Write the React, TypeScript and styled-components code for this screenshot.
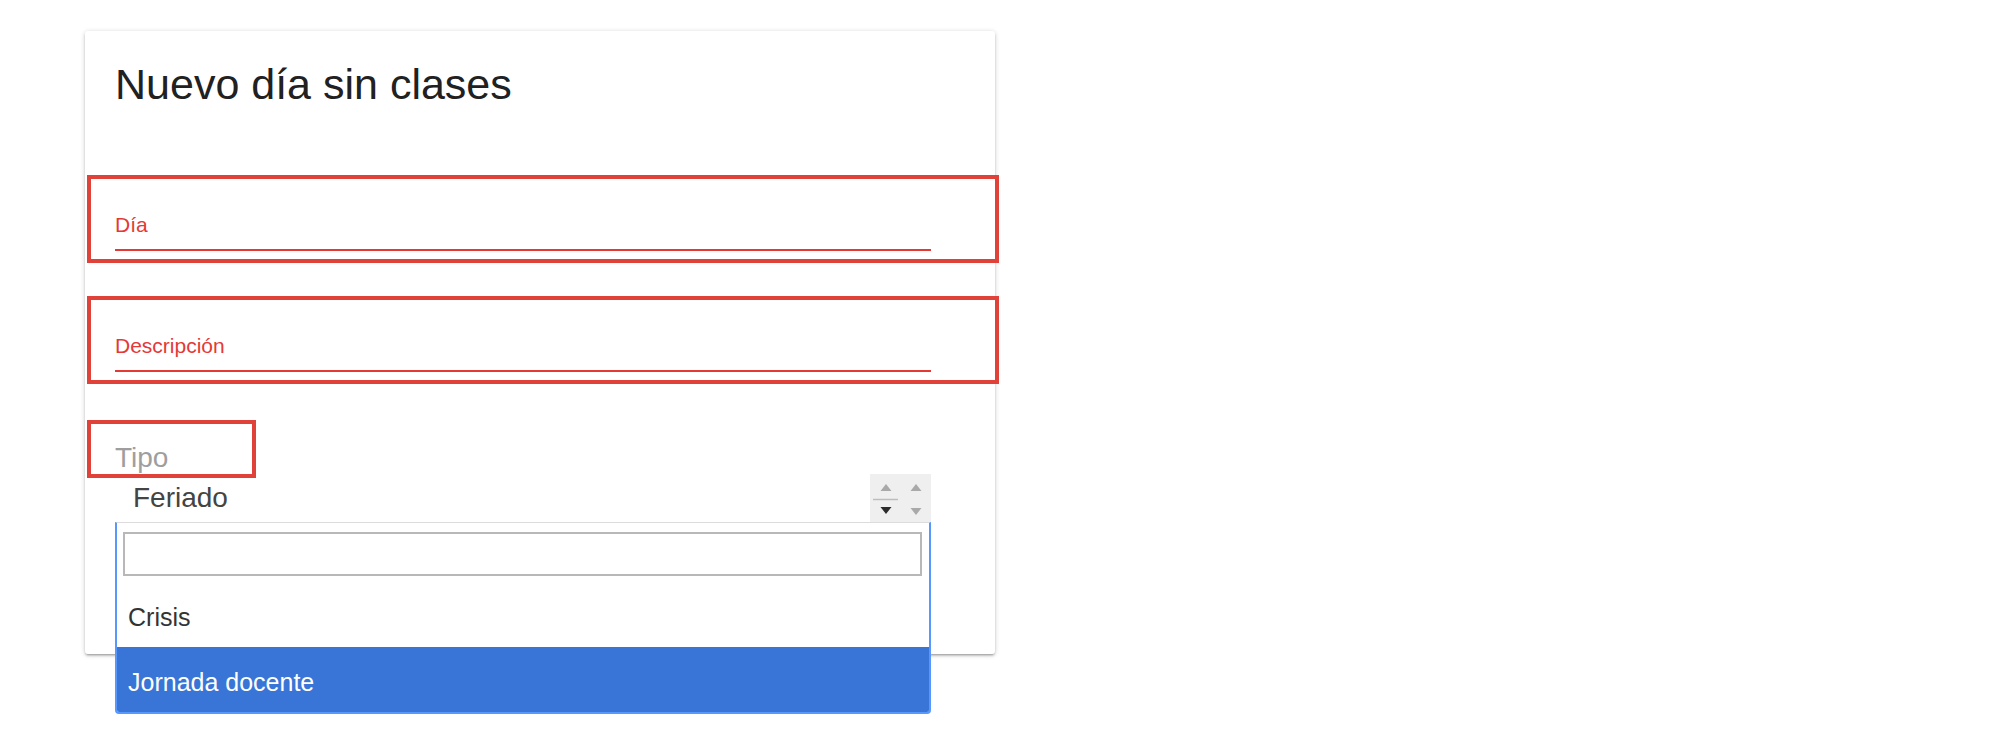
import styled, { createGlobalStyle } from "styled-components";

const GlobalStyle = createGlobalStyle`
  html, body {
    margin: 0;
    background: #ffffff;
    font-family: "Liberation Sans", Arial, sans-serif;
  }
  * {
    box-sizing: border-box;
  }
`;

const Page = styled.div`
  min-height: 739px;
  padding: 31px 0 0 85px;
`;

const Card = styled.div`
  position: relative;
  width: 910px;
  background: #ffffff;
  border-radius: 3px;
  padding: 29px 64px 132px 30px;
  box-shadow: 0 2px 2px 0 rgba(0, 0, 0, 0.14), 0 3px 1px -2px rgba(0, 0, 0, 0.12),
    0 1px 5px 0 rgba(0, 0, 0, 0.2);
`;

const Title = styled.h1`
  margin: 0 0 66px;
  font-size: 43px;
  line-height: 49px;
  font-weight: 400;
  color: #212121;
`;

const FieldBox = styled.div<{ gap?: number }>`
  margin: ${(p) => p.gap ?? 0}px -68px 0 -28px;
  border: 4px solid #e0423a;
  padding: 34px 64px 8px 24px;
`;

const FieldLabel = styled.label`
  display: block;
  font-size: 21px;
  line-height: 24px;
  color: #e53935;
`;

const LineInput = styled.input`
  display: block;
  width: 100%;
  height: 14px;
  padding: 0;
  border: none;
  border-bottom: 2px solid #e53935;
  background: transparent;
  outline: none;
`;

const TipoBox = styled.div`
  position: relative;
  z-index: 1;
  width: 169px;
  margin: 36px 0 -4px -28px;
  border: 4px solid #e0423a;
  padding: 18px 0 0 24px;
  font-size: 28px;
  line-height: 32px;
  color: #9e9e9e;
`;

const SelectRow = styled.div`
  position: relative;
  display: flex;
  justify-content: space-between;
  height: 48px;
  padding-left: 18px;
  font-size: 28px;
  line-height: 48px;
  color: #444444;
`;

const Spinner = styled.div`
  width: 61px;
  height: 48px;
  background: #efefef;
`;

const Dropdown = styled.div`
  position: absolute;
  z-index: 2;
  top: 48px;
  left: 0;
  width: 816px;
  background: #ffffff;
  border: 2px solid #5897fb;
  border-top: 1px solid #dcdcdc;
  border-radius: 0 0 4px 4px;
  overflow: hidden;
`;

const SearchWrap = styled.div`
  padding: 9px 7px 6px 6px;
`;

const SearchInput = styled.input`
  display: block;
  width: 100%;
  height: 44px;
  border: 2px solid #b8b8b8;
  outline: none;
  font-size: 24px;
`;

const Option = styled.div<{ active?: boolean }>`
  display: flex;
  align-items: center;
  height: 65px;
  padding: 4px 0 0 11px;
  font-size: 25px;
  line-height: 30px;
  color: ${(p) => (p.active ? "#ffffff" : "#333333")};
  background: ${(p) => (p.active ? "#3875d7" : "#ffffff")};
`;

function SpinnerArrows() {
  return (
    <svg width="61" height="48" viewBox="0 0 61 48">
      <polygon points="10.5,17 21.5,17 16,10" fill="#a9a9a9" />
      <line x1="3" y1="25.5" x2="28" y2="25.5" stroke="#bdbdbd" strokeWidth="1.5" />
      <polygon points="10.5,33 21.5,33 16,40" fill="#2b2b2b" />
      <polygon points="40.5,17 51.5,17 46,10" fill="#a9a9a9" />
      <polygon points="40.5,34 51.5,34 46,41" fill="#a9a9a9" />
    </svg>
  );
}

export default function App() {
  return (
    <Page>
      <GlobalStyle />
      <Card>
        <Title>Nuevo día sin clases</Title>

        <FieldBox>
          <FieldLabel htmlFor="dia">Día</FieldLabel>
          <LineInput id="dia" type="text" />
        </FieldBox>

        <FieldBox gap={33}>
          <FieldLabel htmlFor="descripcion">Descripción</FieldLabel>
          <LineInput id="descripcion" type="text" />
        </FieldBox>

        <TipoBox>Tipo</TipoBox>
        <SelectRow>
          <span>Feriado</span>
          <Spinner>
            <SpinnerArrows />
          </Spinner>
          <Dropdown>
            <SearchWrap>
              <SearchInput type="text" />
            </SearchWrap>
            <Option>Crisis</Option>
            <Option active>Jornada docente</Option>
          </Dropdown>
        </SelectRow>
      </Card>
    </Page>
  );
}
